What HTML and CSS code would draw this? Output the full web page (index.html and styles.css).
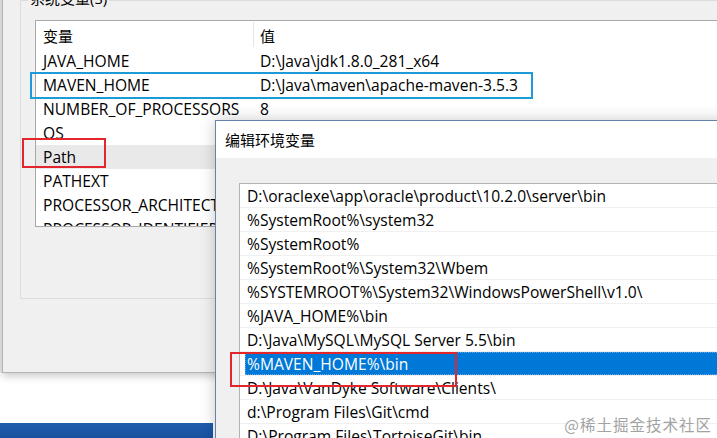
FILE: index.html
```html
<!DOCTYPE html>
<html lang="zh-CN">
<head>
    <meta charset="UTF-8">
    <title>编辑环境变量</title>
    <link rel="stylesheet" href="styles.css">
</head>
<body>

    <div class="edge"></div>

    <!-- 系统属性 -> 环境变量 (behind) -->
    <div class="win back">
        <div class="group">
            <span class="legend">系统变量(S)</span>
            <div class="vars">
                <div class="vrow head">
                    <span class="name">变量</span>
                    <span class="val">值</span>
                </div>
                <div class="vrow"><span class="name">JAVA_HOME</span><span class="val">D:\Java\jdk1.8.0_281_x64</span></div>
                <div class="vrow"><span class="name">MAVEN_HOME</span><span class="val">D:\Java\maven\apache-maven-3.5.3</span></div>
                <div class="vrow"><span class="name">NUMBER_OF_PROCESSORS</span><span class="val">8</span></div>
                <div class="vrow"><span class="name">OS</span><span class="val"></span></div>
                <div class="vrow hover"><span class="name">Path</span><span class="val"></span></div>
                <div class="vrow"><span class="name">PATHEXT</span><span class="val"></span></div>
                <div class="vrow"><span class="name">PROCESSOR_ARCHITECTURE</span><span class="val"></span></div>
                <div class="vrow"><span class="name">PROCESSOR_IDENTIFIER</span><span class="val"></span></div>
            </div>
        </div>
    </div>

    <div class="taskbar"></div>

    <!-- 编辑环境变量 (front) -->
    <div class="win front">
        <div class="title">编辑环境变量</div>
        <div class="body">
            <div class="paths">
                <div class="prow"><span>D:\oraclexe\app\oracle\product\10.2.0\server\bin</span></div>
                <div class="prow"><span>%SystemRoot%\system32</span></div>
                <div class="prow"><span>%SystemRoot%</span></div>
                <div class="prow"><span>%SystemRoot%\System32\Wbem</span></div>
                <div class="prow"><span>%SYSTEMROOT%\System32\WindowsPowerShell\v1.0\</span></div>
                <div class="prow"><span>%JAVA_HOME%\bin</span></div>
                <div class="prow"><span>D:\Java\MySQL\MySQL Server 5.5\bin</span></div>
                <div class="prow sel"><span>%MAVEN_HOME%\bin</span></div>
                <div class="prow"><span>D:\Java\VanDyke Software\Clients\</span></div>
                <div class="prow"><span>d:\Program Files\Git\cmd</span></div>
                <div class="prow"><span>D:\Program Files\TortoiseGit\bin</span></div>
            </div>
        </div>
    </div>

    <!-- annotations -->
    <div class="mark blue m-maven"></div>
    <div class="mark red m-path"></div>
    <div class="mark red m-bin"></div>

    <div class="watermark">@稀土掘金技术社区</div>

</body>
</html>
```

FILE: styles.css
```css
body {
    margin: 0;
    width: 717px;
    height: 438px;
    overflow: hidden;
    position: relative;
    background: #fff;
    font-family: "Open Sans", "Noto Sans CJK SC", sans-serif;
    font-size: 15.6px;
    color: #000;
}

.edge {
    position: absolute;
    left: 0;
    top: 0;
    width: 3px;
    height: 373px;
    background: #ececec;
}

.win {
    position: absolute;
    box-sizing: border-box;
    background: #f0f0f0;
}

/* back window */
.back {
    left: 2px;
    top: -40px;
    width: 780px;
    height: 413px;
    border: 1px solid #b4b4b4;
    box-shadow: 0 3px 8px rgba(0, 0, 0, 0.22);
    padding: 39px 0 0 17px;
}
.group {
    position: relative;
    height: 299px;
    border: 1px solid #dcdcdc;
    box-sizing: border-box;
    padding: 19px 0 0 14px;
}
.legend {
    position: absolute;
    left: 7px;
    top: -13px;
    padding: 0 2px;
    background: #f0f0f0;
    font-size: 15px;
    line-height: 20px;
}
.vars {
    height: 207px;
    overflow: hidden;
    background: #fff;
    border: 1px solid #a8a8a8;
    box-sizing: border-box;
}
.vrow {
    display: flex;
    height: 24px;
    line-height: 25px;
    white-space: nowrap;
}
.vrow.head {
    height: 28px;
    line-height: 31px;
    font-size: 15px;
}
.vrow .name {
    width: 210px;
    padding-left: 7px;
    overflow: hidden;
    flex: none;
}
.vrow .val {
    padding-left: 7px;
}
.vrow.head .val {
    border-left: 1px solid #e5e5e5;
    height: 25px;
    margin-top: 1px;
    line-height: 29px;
    padding-left: 6px;
}
.vrow.hover {
    background: #e9e9e9;
}

.taskbar {
    position: absolute;
    left: 0;
    bottom: 0;
    width: 213px;
    height: 15px;
    background: linear-gradient(#1e5cab, #1a52a0);
}

/* front window */
.front {
    left: 215px;
    top: 120px;
    width: 540px;
    height: 360px;
    border: 1px solid #6583aa;
    box-shadow: 0 0 14px rgba(0, 0, 0, 0.22);
}
.title {
    height: 37px;
    line-height: 38px;
    padding-left: 9px;
    font-size: 15px;
    background: #fff;
}
.body {
    padding: 25px 0 0 23px;
}
.paths {
    background: #fff;
    border: 1px solid #b3b3b3;
    height: 300px;
}
.prow {
    display: flex;
    height: 23px;
    border-bottom: 1px solid #f0f0f0;
    line-height: 25px;
    white-space: nowrap;
}
.prow span {
    flex: 1;
    padding-left: 7px;
}
.prow.sel span {
    margin-left: 5px;
    padding-left: 2px;
    background: #0078d7;
    color: #fff;
    outline: 1px dotted #6aa6e0;
    outline-offset: -1px;
}

/* annotation boxes */
.mark {
    position: absolute;
    box-sizing: border-box;
    border: 2px solid;
}
.blue { border-color: #1d9bd7; }
.red { border-color: #e3262b; }
.m-maven {
    left: 30px;
    top: 72px;
    width: 503px;
    height: 27px;
}
.m-path {
    left: 22px;
    top: 138px;
    width: 84px;
    height: 30px;
}
.m-bin {
    left: 230px;
    top: 352px;
    width: 227px;
    height: 35px;
}

.watermark {
    position: absolute;
    right: 5px;
    bottom: 5px;
    font-family: "Noto Sans CJK SC", sans-serif;
    font-size: 15.5px;
    letter-spacing: 1px;
    line-height: 18px;
    color: #a3a3a3;
    text-shadow: 0 0 2px #fff;
}
```
